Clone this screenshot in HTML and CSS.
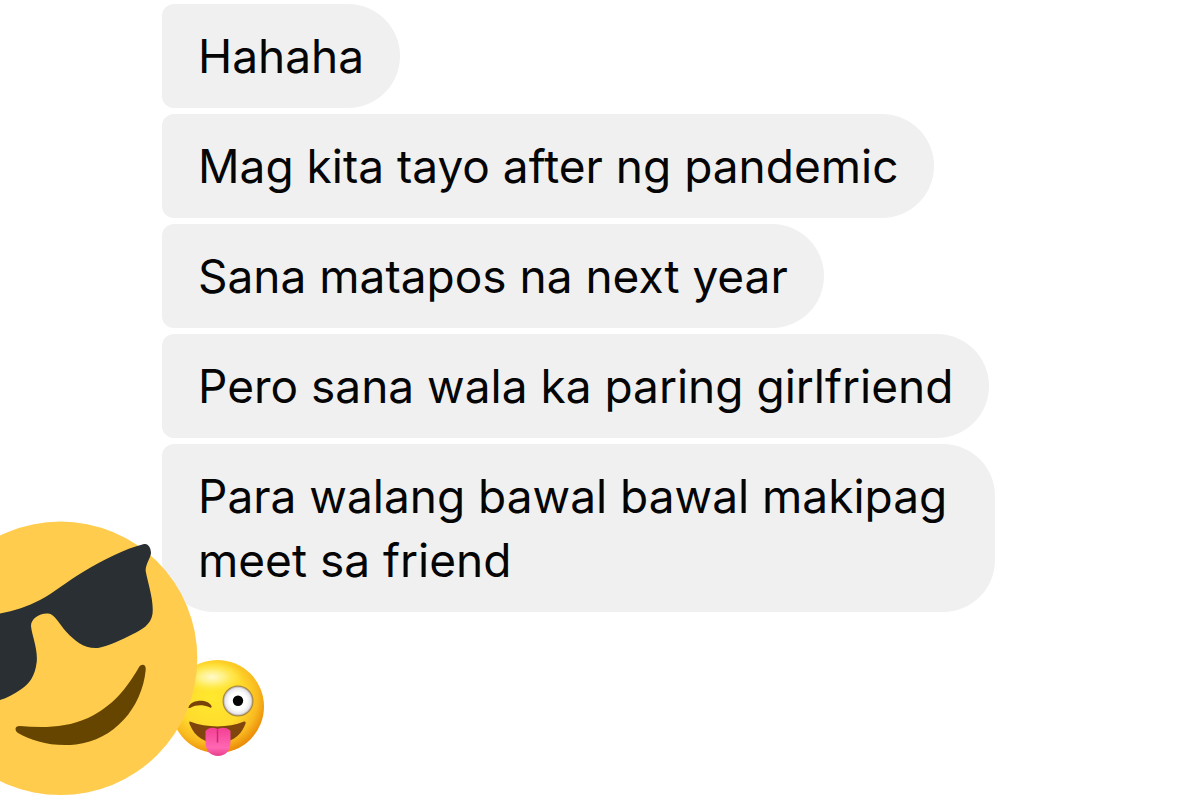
FILE: index.html
```
<!DOCTYPE html>
<html lang="tl">
<head>
    <meta charset="UTF-8">
    <meta name="viewport" content="width=device-width, initial-scale=1.0">
    <title>Chat</title>
    <link rel="stylesheet" href="styles.css">
</head>
<body>
    <main class="chat">
        <div class="messages">
            <p class="bubble">Hahaha</p>
            <p class="bubble">Mag kita tayo after ng pandemic</p>
            <p class="bubble">Sana matapos na next year</p>
            <p class="bubble">Pero sana wala ka paring girlfriend</p>
            <p class="bubble last">Para walang bawal bawal makipag meet sa friend</p>
            <svg class="emoji" viewBox="170 660 96 98" role="img" aria-label="Winking face with tongue">
                <defs>
                    <radialGradient id="skin" cx="0.44" cy="0.4" r="0.62">
                        <stop offset="0" stop-color="#ffe92e"/>
                        <stop offset="0.55" stop-color="#ffdb2d"/>
                        <stop offset="0.8" stop-color="#f9ba20"/>
                        <stop offset="1" stop-color="#e98707"/>
                    </radialGradient>
                    <radialGradient id="shine">
                        <stop offset="0" stop-color="#fffbd8" stop-opacity="0.95"/>
                        <stop offset="0.4" stop-color="#fff8a8" stop-opacity="0.7"/>
                        <stop offset="1" stop-color="#fff04c" stop-opacity="0"/>
                    </radialGradient>
                    <radialGradient id="eye">
                        <stop offset="0.6" stop-color="#ffffff"/>
                        <stop offset="0.88" stop-color="#e8e8ee"/>
                        <stop offset="1" stop-color="#b3aaa0"/>
                    </radialGradient>
                    <linearGradient id="tongue" x1="0" y1="0" x2="0" y2="1">
                        <stop offset="0" stop-color="#f43f94"/>
                        <stop offset="0.7" stop-color="#ff67b3"/>
                        <stop offset="1" stop-color="#e83e8c"/>
                    </linearGradient>
                </defs>
                <circle cx="217.500" cy="707.500" r="46.500" fill="url(#skin)"/>
                <ellipse cx="212" cy="678" rx="31" ry="15" fill="url(#shine)"/>
                <circle cx="238" cy="702" r="15.500" fill="#a8843c"/>
                <circle cx="238" cy="702" r="14.500" fill="url(#eye)"/>
                <circle cx="238" cy="701.700" r="5.200" fill="#050505"/>
                <path d="M188.500 708 C192 700 208 700 211.500 707 C212 709 210.500 709 209 708 C203 705.500 196 705.500 191 708.500 C189 709.500 188 709 188.500 708Z" fill="#79400a"/>
                <path d="M190 722.500 C207 729 228 729 244 722.500 C246 722 246 724 245 726 C240 738 230 744 217.500 744 C205 744 195 738 190 726 C189 724 189 722 190 722.500Z" fill="#80450c"/>
                <path d="M205.500 732 C209 728 213 728 217.500 730 C222 728 227 728 230.500 732 L230.500 743 C230.500 752 225 757 218 757 C211 757 205.500 752 205.500 743Z" fill="url(#tongue)"/>
                <path d="M217.500 731 V743" stroke="#cb286f" stroke-width="1.500" stroke-linecap="round"/>
            </svg>
        </div>
        <svg class="sticker" viewBox="-76 521 274 275" role="img" aria-label="Smiling face with sunglasses">
            <circle cx="60.500" cy="658.300" r="136.800" fill="#ffcc4d"/>
            <path d="M-60 612 C-30 620 10 616 40 600 C55 592 66 582 83 572 C103 560 124 549 144 544 C149 543 151 549 151 553 C151 557 145 565 145.700 571 C148 584 154 600 152.500 614 C151 625 141 630 133 634 C121 640 109 646 98 648 C84 649 75 641 66.500 632 C59 624 55 614 48 613.500 C39 613 31 619 31 626 C32 636 38 649 36.700 662 C35 677 29 684 20 690 C14 694 7 698 0 700 C-30 711 -52 680 -60 645Z" fill="#292f33"/>
            <path d="M138.500 668 C141 663 146.500 664 145.700 670 C142 708 114 740 76 744.500 C52 747 32 741 18 733 C14 730 15 725.500 20 726 C42 728 66 728 88 718 C113 706 126 689 138.500 668Z" fill="#664500"/>
        </svg>
    </main>
</body>
</html>
```

FILE: styles.css
```
* {
    box-sizing: border-box;
}
body {
    margin: 0;
    background: #fff;
    color: #050505;
    font-family: Inter, "Liberation Sans", sans-serif;
    font-size: 46px;
    line-height: 64px;
}
.chat {
    position: relative;
    min-height: 100vh;
    overflow: hidden;
}
.messages {
    display: flex;
    flex-direction: column;
    align-items: flex-start;
    gap: 6px;
    padding: 4px 24px 0 162px;
}
.bubble {
    margin: 0;
    padding: 20px 36px;
    max-width: 833px;
    background: #f0f0f0;
    border-radius: 12px 52px 52px 12px;
}
.bubble.last {
    border-bottom-left-radius: 52px;
}
.emoji {
    width: 96px;
    height: 98px;
    margin: 41px 0 0 8px;
}
/* big sticker hangs off the left edge, over the messages */
.sticker {
    position: absolute;
    left: -76px;
    bottom: 1px;
    width: 274px;
    height: 275px;
}
```
